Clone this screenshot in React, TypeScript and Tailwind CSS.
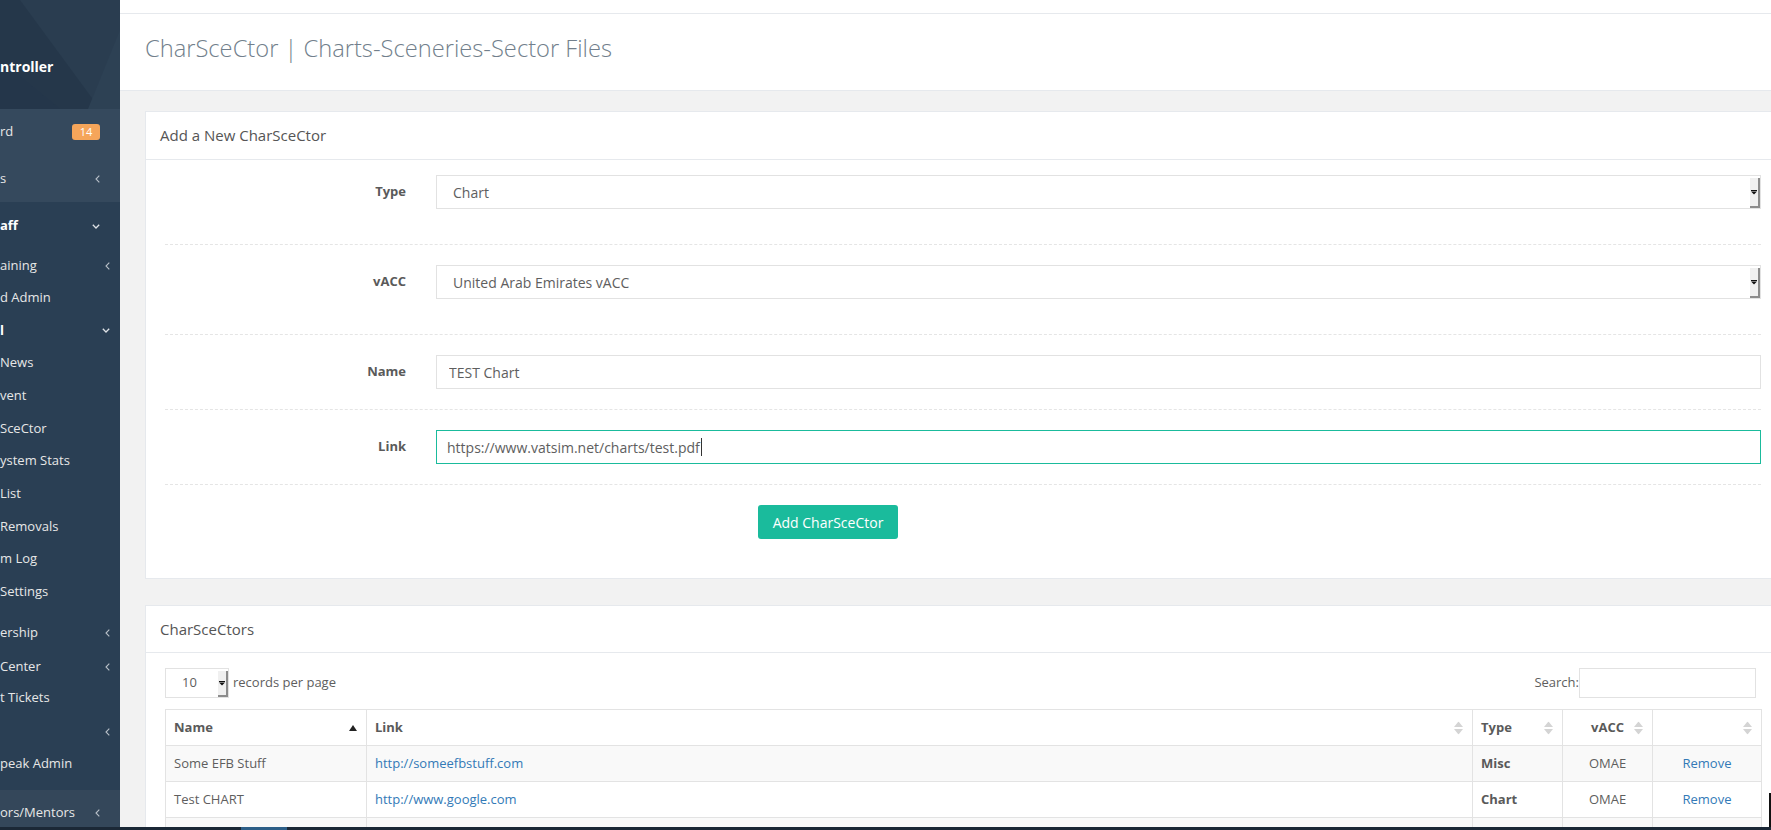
import React from "react";

type SideItem = {
  label: string;
  cls: string;
  icon?: "left" | "down";
  iconCls?: string;
  badge?: string;
};

const topGroup: SideItem[] = [
  { label: "rd", cls: "h-[46px]", badge: "14" },
  { label: "s", cls: "h-[47px]", icon: "left", iconCls: "pr-[20px]" },
];

const mainGroup: SideItem[] = [
  { label: "aff", cls: "h-[48px] font-bold text-white", icon: "down", iconCls: "pr-[20px]" },
  { label: "aining", cls: "h-[32px]", icon: "left", iconCls: "pr-[10px]" },
  { label: "d Admin", cls: "h-[32px]" },
  { label: "l", cls: "h-[33px] font-bold text-white", icon: "down", iconCls: "pr-[10px]" },
  { label: "News", cls: "h-[32px]" },
  { label: "vent", cls: "h-[33px]" },
  { label: "SceCtor", cls: "h-[33px]" },
  { label: "ystem Stats", cls: "h-[32px]" },
  { label: "List", cls: "h-[33px]" },
  { label: "Removals", cls: "h-[33px]" },
  { label: "m Log", cls: "h-[32px]" },
  { label: "Settings", cls: "h-[33px]" },
  { label: "ership", cls: "mt-[8px] h-[34px]", icon: "left", iconCls: "pr-[10px]" },
  { label: "Center", cls: "h-[34px]", icon: "left", iconCls: "pr-[10px]" },
  { label: "t Tickets", cls: "h-[28px]" },
  { label: "", cls: "h-[40px]", icon: "left", iconCls: "pr-[10px]" },
  { label: "peak Admin", cls: "h-[24px]" },
];

const rows = [
  { name: "Some EFB Stuff", link: "http://someefbstuff.com", type: "Misc", vacc: "OMAE" },
  { name: "Test CHART", link: "http://www.google.com", type: "Chart", vacc: "OMAE" },
];

function Chevron({ dir }: { dir: "left" | "down" }) {
  if (dir === "down") {
    return (
      <svg width="8" height="5" viewBox="0 0 8 5" className="block">
        <path d="M0.8 0.8 L4 4 L7.2 0.8" fill="none" stroke="#dfe3e7" strokeWidth="1.3" />
      </svg>
    );
  }
  return (
    <svg width="5" height="8" viewBox="0 0 5 8" className="block">
      <path d="M4.3 0.6 L1 4 L4.3 7.4" fill="none" stroke="#b9c1c9" strokeWidth="1.1" />
    </svg>
  );
}

function SideRow({ item }: { item: SideItem }) {
  return (
    <div className={`flex shrink-0 items-center justify-between whitespace-nowrap text-[13px] ${item.cls}`}>
      <span>{item.label}</span>
      {item.badge && (
        <span className="mr-[20px] flex h-[16px] w-[28px] items-center justify-center rounded-[3px] bg-[#F5A55A] text-[11px] text-white">
          {item.badge}
        </span>
      )}
      {item.icon && (
        <span className={item.iconCls}>
          <Chevron dir={item.icon} />
        </span>
      )}
    </div>
  );
}

function Sidebar() {
  return (
    <aside className="flex w-[120px] shrink-0 flex-col overflow-hidden bg-[#2A3F54] text-[#E7E7E7]">
      <div className="relative h-[109px] shrink-0 bg-[#25374A]">
        <svg className="absolute inset-0" width="120" height="109" viewBox="0 0 120 109">
          <polygon points="20,0 120,0 120,109 100,109" fill="#2A3D50" />
          <polygon points="120,30 88,109 120,109" fill="#2D4154" />
          <polygon points="0,60 0,109 60,109" fill="#24364A" />
        </svg>
        <div className="relative pt-[57px] text-[14px] font-bold leading-[20px] text-white">ntroller</div>
      </div>
      <div className="flex shrink-0 flex-col bg-[#35495D]">
        {topGroup.map((item) => (
          <SideRow key={item.label} item={item} />
        ))}
      </div>
      <div className="flex shrink-0 flex-col">
        {mainGroup.map((item, i) => (
          <SideRow key={i} item={item} />
        ))}
      </div>
      <div className="mt-[14px] flex shrink-0 flex-col bg-[#34475A]">
        <SideRow item={{ label: "ors/Mentors", cls: "h-[46px]", icon: "left", iconCls: "pr-[20px]" }} />
      </div>
    </aside>
  );
}

function SelectArrow() {
  return (
    <div className="absolute right-0 top-[2px] bottom-0 flex w-[10px] items-center justify-center border-r-2 border-b-2 border-[#8C8C8C] bg-[#F0F0F0]">
      <svg width="6" height="5" viewBox="0 0 6 5" className="block">
        <rect x="0" y="0" width="6" height="1" fill="#111" />
        <polygon points="0,1.5 6,1.5 3,4.5" fill="#111" />
      </svg>
    </div>
  );
}

function FakeSelect({ value, text = "text-[14px]", cls }: { value: string; text?: string; cls: string }) {
  return (
    <div className={`relative flex items-center border border-[#E2E2E2] bg-white text-[#5E5E5E] ${text} ${cls}`}>
      <span>{value}</span>
      <SelectArrow />
    </div>
  );
}

function FormRow({ label, children }: { label: string; children: React.ReactNode }) {
  return (
    <div className="grid grid-cols-[241px_1fr] items-center gap-x-[30px]">
      <label className="text-right text-[13px] font-bold text-[#5A5A5A]">{label}</label>
      {children}
    </div>
  );
}

function Dashed({ top }: { top: string }) {
  return <div className={`border-t border-dashed border-[#E5E5E5] ${top}`} />;
}

function SortIcon() {
  return (
    <svg width="9" height="13" viewBox="0 0 9 13" className="block">
      <polygon points="4.5,0 9,5.5 0,5.5" fill="#D4D4D4" />
      <polygon points="0,7.5 9,7.5 4.5,13" fill="#D4D4D4" />
    </svg>
  );
}

function Th({ children, cls = "text-left", sort = "both", w }: { children?: React.ReactNode; cls?: string; sort?: "asc" | "both"; w: string }) {
  return (
    <th className={`relative h-[36px] border border-[#E3E3E3] px-[8px] text-[13px] font-bold text-[#5A5A5A] ${w} ${cls}`}>
      {children}
      <span className="absolute right-[9px] top-1/2 -translate-y-1/2">
        {sort === "asc" ? (
          <svg width="8" height="6" viewBox="0 0 8 6" className="block">
            <polygon points="4,0 8,6 0,6" fill="#222" />
          </svg>
        ) : (
          <SortIcon />
        )}
      </span>
    </th>
  );
}

export default function App() {
  return (
    <div className="flex h-[830px] w-[1771px] flex-col overflow-hidden font-['Open_Sans',sans-serif]">
      <div className="flex h-[827px] shrink-0">
        <Sidebar />
        <main className="relative flex min-w-0 flex-1 flex-col overflow-hidden bg-[#F2F2F2]">
          <div className="h-[14px] shrink-0 border-b border-[#E6E9ED] bg-white" />
          <div className="h-[77px] shrink-0 border-b border-[#E6E9ED] bg-white pl-[25px] pt-[20px]">
            <h3 className="whitespace-nowrap text-[23.7px] font-light leading-[29px] text-[#727F8C]">
              CharSceCtor | Charts-Sceneries-Sector Files
            </h3>
          </div>

          <div className="flex flex-col pl-[25px] pt-[20px]">
            {/* add form */}
            <section className="w-[1636px] shrink-0 border border-[#E6E9ED] bg-white">
              <div className="flex h-[48px] items-center border-b border-[#E6E9ED] px-[14px] text-[15px] text-[#555]">
                Add a New CharSceCtor
              </div>
              <div className="px-[19px] pt-[15px] pb-[39px]">
                <FormRow label="Type">
                  <FakeSelect value="Chart" cls="h-[34px] pl-[16px]" />
                </FormRow>
                <Dashed top="mt-[35px] mb-[20px]" />
                <FormRow label="vACC">
                  <FakeSelect value="United Arab Emirates vACC" cls="h-[34px] pl-[16px]" />
                </FormRow>
                <Dashed top="mt-[35px] mb-[20px]" />
                <FormRow label="Name">
                  <input
                    readOnly
                    value="TEST Chart"
                    className="h-[34px] w-full border border-[#E2E2E2] bg-white px-[12px] text-[14px] text-[#5E5E5E] outline-none"
                  />
                </FormRow>
                <Dashed top="mt-[20px] mb-[20px]" />
                <FormRow label="Link">
                  <div className="flex h-[34px] items-center border border-[#1ABB9C] bg-white px-[10px] text-[14px] text-[#5E5E5E]">
                    <span>https://www.vatsim.net/charts/test.pdf</span>
                    <span className="ml-[1px] h-[18px] w-[1px] bg-[#333]" />
                  </div>
                </FormRow>
                <Dashed top="mt-[20px] mb-[20px]" />
                <button className="ml-[593px] h-[34px] w-[140px] rounded-[3px] bg-[#1ABB9C] text-[14px] text-white">
                  Add CharSceCtor
                </button>
              </div>
            </section>

            {/* list */}
            <section className="mt-[26px] w-[1636px] shrink-0 border border-[#E6E9ED] bg-white">
              <div className="flex h-[47px] items-center border-b border-[#E6E9ED] px-[14px] text-[15px] text-[#555]">
                CharSceCtors
              </div>
              <div className="px-[19px] pt-[15px]">
                <div className="flex items-center justify-between pr-[5px] text-[13px] text-[#5E5E5E]">
                  <div className="flex items-center">
                    <FakeSelect value="10" text="text-[13px]" cls="h-[30px] w-[64px] pl-[16px]" />
                    <span className="ml-[4px]">records per page</span>
                  </div>
                  <div className="flex items-center">
                    <span>Search:</span>
                    <div className="h-[30px] w-[177px] border border-[#E2E2E2] bg-white" />
                  </div>
                </div>
                <table className="mt-[11px] w-[1596px] table-fixed border-collapse text-[13px] text-[#5E5E5E]">
                  <thead>
                    <tr>
                      <Th w="w-[201px]" sort="asc">Name</Th>
                      <Th w="w-[1106px]">Link</Th>
                      <Th w="w-[90px]">Type</Th>
                      <Th w="w-[90px]" cls="text-center">vACC</Th>
                      <Th w="w-[109px]" />
                    </tr>
                  </thead>
                  <tbody>
                    {rows.map((r, i) => (
                      <tr key={r.name} className={i % 2 === 0 ? "bg-[#F9F9F9]" : "bg-white"}>
                        <td className="h-[36px] border border-[#E3E3E3] px-[8px]">{r.name}</td>
                        <td className="border border-[#E3E3E3] px-[8px] text-[#337AB7]">{r.link}</td>
                        <td className="border border-[#E3E3E3] px-[8px] font-bold text-[#5A5A5A]">{r.type}</td>
                        <td className="border border-[#E3E3E3] px-[8px] text-center">{r.vacc}</td>
                        <td className="border border-[#E3E3E3] px-[8px] text-center text-[#337AB7]">Remove</td>
                      </tr>
                    ))}
                    <tr className="bg-[#F9F9F9]">
                      <td className="h-[36px] border border-[#E3E3E3]" />
                      <td className="border border-[#E3E3E3]" />
                      <td className="border border-[#E3E3E3]" />
                      <td className="border border-[#E3E3E3]" />
                      <td className="border border-[#E3E3E3]" />
                    </tr>
                  </tbody>
                </table>
              </div>
            </section>
          </div>
          <div className="absolute right-0 top-[793px] h-[40px] w-[2px] bg-[#111]" />
        </main>
      </div>
      <div className="flex h-[3px] shrink-0 bg-[#1B2836]">
        <div className="ml-[241px] h-full w-[46px] bg-[#2C5E87]" />
      </div>
    </div>
  );
}
